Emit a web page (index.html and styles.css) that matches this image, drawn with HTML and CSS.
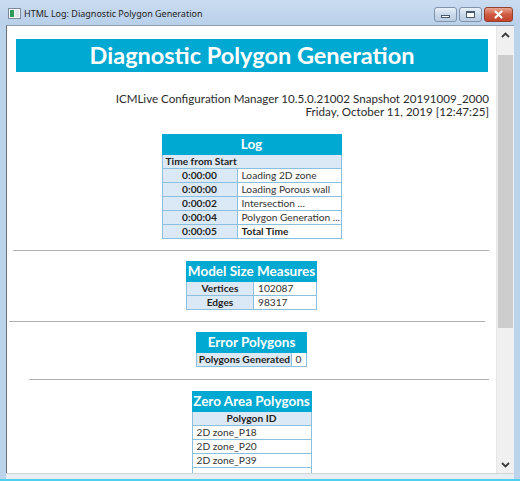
FILE: index.html
```html
<!DOCTYPE html>
<html lang="en">
<head>
    <meta charset="UTF-8">
    <title>HTML Log: Diagnostic Polygon Generation</title>
    <link rel="stylesheet" href="styles.css">
</head>
<body>

    <div class="window">
        <div class="titlebar">
            <svg class="app-icon" width="13" height="11" viewBox="0 0 13 11">
                <rect x="0.5" y="0.5" width="12" height="10" fill="#f4f6f8" stroke="#7a8a9a"/>
                <rect x="2" y="2" width="4" height="7" fill="#2f9a5a"/>
                <rect x="7" y="2" width="4" height="7" fill="#dfe6ee"/>
            </svg>
            <span class="title">HTML Log: Diagnostic Polygon Generation</span>
            <div class="controls">
                <span class="ctl ctl-min"><i></i></span>
                <span class="ctl ctl-max"><i></i></span>
                <span class="ctl ctl-close">
                    <svg width="11" height="9" viewBox="0 0 11 9">
                        <path d="M2.5 1.5 L8.5 7.5 M8.5 1.5 L2.5 7.5" stroke="#fff" stroke-width="2.2" stroke-linecap="round"/>
                    </svg>
                </span>
            </div>
        </div>

        <div class="client">
            <div class="page">
                <h1 class="banner">Diagnostic Polygon Generation</h1>
                <p class="meta">
                    ICMLive Configuration Manager 10.5.0.21002 Snapshot 20191009_2000<br>
                    Friday, October 11, 2019 [12:47:25]
                </p>

                <table class="grid log">
                    <colgroup><col class="c-time"><col class="c-step"></colgroup>
                    <tr><th colspan="2" class="head">Log</th></tr>
                    <tr><td colspan="2" class="label left">Time from Start</td></tr>
                    <tr><td class="label">0:00:00</td><td>Loading 2D zone</td></tr>
                    <tr><td class="label">0:00:00</td><td>Loading Porous wall</td></tr>
                    <tr><td class="label">0:00:02</td><td>Intersection ...</td></tr>
                    <tr><td class="label">0:00:04</td><td>Polygon Generation ...</td></tr>
                    <tr><td class="label">0:00:05</td><td class="strong">Total Time</td></tr>
                </table>

                <hr class="rule rule-a">

                <table class="grid model">
                    <colgroup><col class="c-name"><col class="c-count"></colgroup>
                    <tr><th colspan="2" class="head">Model Size Measures</th></tr>
                    <tr><td class="label">Vertices</td><td>102087</td></tr>
                    <tr><td class="label">Edges</td><td>98317</td></tr>
                </table>

                <hr class="rule rule-b">

                <table class="grid errors">
                    <colgroup><col class="c-kind"><col class="c-num"></colgroup>
                    <tr><th colspan="2" class="head">Error Polygons</th></tr>
                    <tr><td class="label">Polygons Generated</td><td class="tight">0</td></tr>
                </table>

                <hr class="rule rule-c">

                <table class="grid zero">
                    <tr><th class="head">Zero Area Polygons</th></tr>
                    <tr><td class="label">Polygon ID</td></tr>
                    <tr><td>2D zone_P18</td></tr>
                    <tr><td>2D zone_P20</td></tr>
                    <tr><td>2D zone_P39</td></tr>
                    <tr><td>&nbsp;</td></tr>
                </table>
            </div>

            <div class="scrollbar">
                <div class="arrow">
                    <svg width="9" height="6" viewBox="0 0 9 6"><path d="M1 5 L4.5 1.5 L8 5" fill="none" stroke="#3a3a3a" stroke-width="1.8"/></svg>
                </div>
                <div class="track">
                    <div class="thumb"></div>
                </div>
                <div class="arrow">
                    <svg width="9" height="6" viewBox="0 0 9 6"><path d="M1 1 L4.5 4.5 L8 1" fill="none" stroke="#3a3a3a" stroke-width="1.8"/></svg>
                </div>
            </div>
        </div>
        <div class="bottom-edge"></div>
    </div>

</body>
</html>
```

FILE: styles.css
```css
body {
    margin: 0;
    padding: 0;
    background: #ffffff;
    font-family: Lato, "Open Sans", sans-serif;
}

.window {
    width: 520px;
    height: 481px;
    box-sizing: border-box;
    background: #bcd3ec;
    border-bottom: 2px solid #4fd0ef;
    display: flex;
    flex-direction: column;
    overflow: hidden;
}

.titlebar {
    height: 25px;
    display: flex;
    align-items: center;
    padding: 0 7px 0 8px;
    background: linear-gradient(#cadcf0, #b9d0ea);
}

.app-icon {
    margin-right: 3px;
    margin-top: 1px;
}

.title {
    font-family: "Noto Sans", sans-serif;
    font-size: 9px;
    color: #1d1d1d;
    margin-top: 1px;
}

.controls {
    margin-left: auto;
    display: flex;
    gap: 2px;
    margin-top: 4px;
}

.ctl {
    height: 15px;
    width: 23px;
    border: 1px solid #7f93ac;
    border-radius: 3px;
    background: linear-gradient(#eaf1f9, #cad9ea 50%, #bccde2);
    display: flex;
    align-items: center;
    justify-content: center;
    box-sizing: border-box;
}

.ctl-min i {
    width: 9px;
    height: 3px;
    margin-top: 3px;
    background: #fff;
    border: 1px solid #4a5a6e;
    box-sizing: border-box;
}

.ctl-max i {
    width: 9px;
    height: 7px;
    border: 1px solid #4a5a6e;
    border-top-width: 2px;
    background: #fff;
    box-sizing: border-box;
}

.ctl-close {
    width: 29px;
    border-color: #93402f;
    background: linear-gradient(#e8a592, #cf5a42 50%, #c2432c);
}

.client {
    flex: 1;
    display: flex;
    margin: 0 6px 0 6px;
    border-left: 1px solid #6f6f6f;
    border-top: 1px solid #8c9db3;
    background: #ffffff;
    overflow: hidden;
}

.bottom-edge {
    height: 5px;
    margin: 0 6px;
    background: #e9eef3;
    border-top: 1px solid #d0d6dc;
}

.page {
    flex: 1;
    overflow: hidden;
    padding-top: 13px;
}

.banner {
    margin: 0 8px 0 9px;
    height: 33px;
    line-height: 33px;
    background: #00a9d1;
    color: #ffffff;
    text-align: center;
    font-size: 23.5px;
    font-weight: bold;
}

.meta {
    margin: 20px 7px 0 0;
    text-align: right;
    font-size: 11.6px;
    line-height: 13px;
    color: #2b2b2b;
}

.grid {
    border-collapse: collapse;
    table-layout: fixed;
    margin: 0 auto;
    font-size: 10.2px;
    color: #333333;
}

.grid th,
.grid td {
    border: 1px solid #8bbfe0;
    padding: 0 4px;
    line-height: 13px;
    white-space: nowrap;
    overflow: hidden;
}

.grid .head {
    background: #00a9d1;
    color: #ffffff;
    font-size: 13.5px;
    line-height: 19px;
    padding: 0;
    border-color: #00a9d1;
}

.grid .label {
    background: #dbe8f5;
    font-weight: bold;
    color: #1f1f1f;
    text-align: center;
}

.grid .left {
    text-align: left;
    padding-left: 3px;
}

.grid .strong {
    font-weight: bold;
    color: #1f1f1f;
}

.grid .tight {
    padding: 0 3px;
}

.log {
    margin-top: 16px;
    width: 179px;
}

.c-time {
    width: 75px;
}

.c-step {
    width: 104px;
}

.model {
    margin-top: 10px;
    width: 130px;
}

.c-name {
    width: 67px;
}

.c-count {
    width: 63px;
}

.errors {
    margin-top: 10px;
    width: 109px;
}

.c-kind {
    width: 95px;
}

.c-num {
    width: 14px;
}

.errors td.label {
    padding: 0 1px;
}

.zero {
    margin-top: 11px;
    width: 120px;
}

.rule {
    border: 0;
    height: 0;
    border-top: 1px solid #b0b0b0;
}

.rule-a {
    margin: 11px 7px 0 6px;
}

.rule-b {
    margin: 11px 11px 0 2px;
}

.rule-c {
    margin: 12px 7px 0 22px;
}

.scrollbar {
    width: 17px;
    background: #f0f0f0;
    display: flex;
    flex-direction: column;
    border-left: 1px solid #e6e6e6;
}

.arrow {
    height: 17px;
    display: flex;
    align-items: center;
    justify-content: center;
}

.track {
    flex: 1;
    padding: 12px 1px 0 1px;
}

.thumb {
    height: 273px;
    background: #cdcdcd;
}
```
